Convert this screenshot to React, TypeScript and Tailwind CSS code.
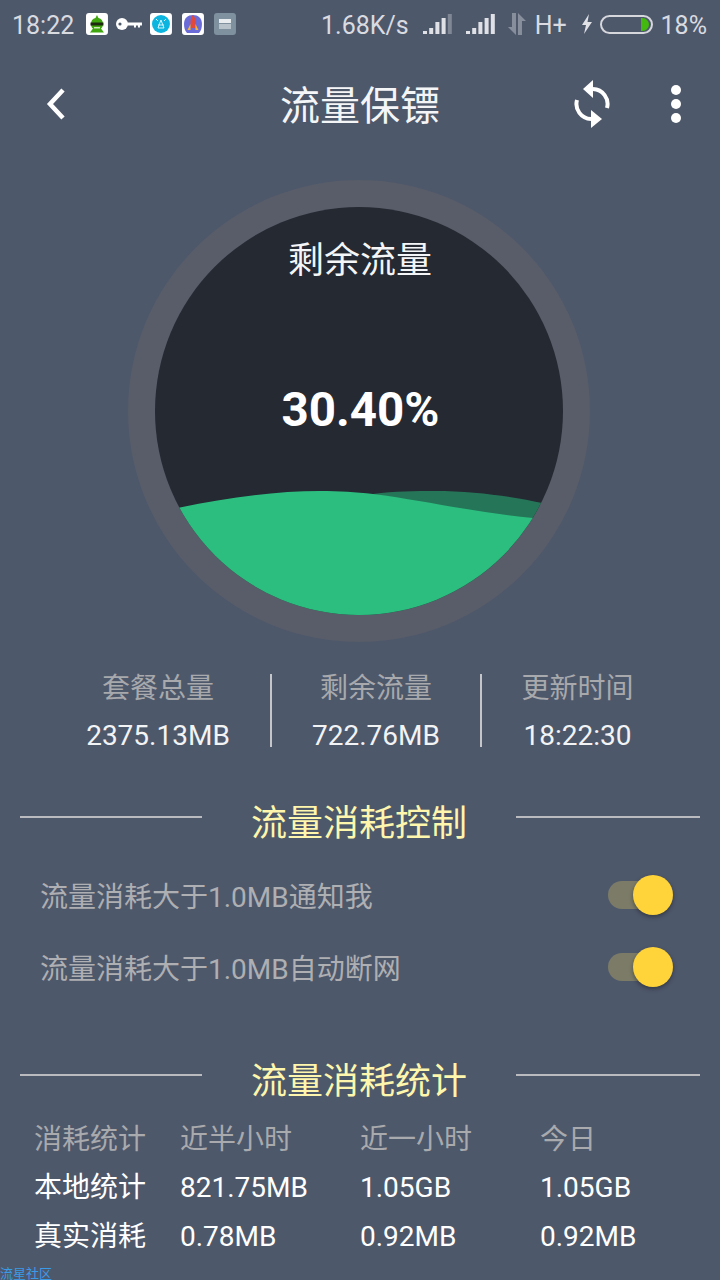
import React from "react";

const font = { fontFamily: 'Roboto, "Noto Sans CJK SC", sans-serif' };

function Signal({ faint }: { faint?: boolean }) {
  const hs = [3, 6, 12, 16, 20];
  return (
    <svg width="30" height="20" viewBox="0 0 30 20">
      {hs.map((h, i) => (
        <rect key={i} x={i * 6.2} y={20 - h} width="4" height={h} fill="#dfe1e6" opacity={faint && i === 4 ? 0.35 : 1} />
      ))}
    </svg>
  );
}

function Sync() {
  return (
    <svg width="36" height="48" viewBox="0 0 36 48" fill="none">
      <path d="M19 9A15 15 0 0 1 33 28" stroke="#fff" strokeWidth="4" />
      <path d="M17 39A15 15 0 0 1 3 20" stroke="#fff" strokeWidth="4" />
      <polygon points="19,0 19,18 9,9" fill="#fff" />
      <polygon points="17,30 17,48 28,39" fill="#fff" />
    </svg>
  );
}

function Heading({ children }: { children: React.ReactNode }) {
  return (
    <div className="flex items-center h-[50px] px-[20px]">
      <div className="h-[2px] w-[182px] bg-[#b9bbbf] mb-[10px]" />
      <div className="flex-1 text-center text-[36px] leading-[50px] pt-[4px] text-[#fdf6ac]">{children}</div>
      <div className="h-[2px] w-[184px] bg-[#b9bbbf] mb-[10px]" />
    </div>
  );
}

function SwitchRow({ label }: { label: string }) {
  return (
    <div className="flex items-center justify-between h-[72px] pl-[40px] pr-[47px]">
      <span className="text-[28px] pt-[6px] text-[#aeafb2]">{label}</span>
      <div className="relative w-[65px] h-[28px]">
        <div className="w-[60px] h-[28px] rounded-full bg-[#7b7b68]" />
        <div className="absolute right-0 top-[-6px] w-[40px] h-[40px] rounded-full bg-[#ffd33a] shadow-[0_2px_4px_rgba(0,0,0,0.35)]" />
      </div>
    </div>
  );
}

const rows = [
  { c: "text-[#a9aaad] pt-[2px]", v: ["消耗统计", "近半小时", "近一小时", "今日"] },
  { c: "text-white", v: ["本地统计", "821.75MB", "1.05GB", "1.05GB"] },
  { c: "text-white", v: ["真实消耗", "0.78MB", "0.92MB", "0.92MB"] },
];

export default function App() {
  return (
    <div style={font} className="w-[720px] h-[1280px] overflow-hidden bg-[#4e586b] text-white">
      {/* status bar */}
      <div className="h-[48px] mb-[2px] flex items-center pl-[12px] pr-[13px] text-[25px] text-[#d9dbe0]">
        <span className="pt-[4px]">18:22</span>
        <svg className="ml-[12px]" width="22" height="22" viewBox="0 0 22 22">
          <rect width="22" height="22" rx="3" fill="#fff" />
          <path d="M11 2l1.500 3c3 .5 4.500 3 4.500 6 0 2-.5 3.500-2 4.500l3 4H4l3-4c-1.500-1-2-2.500-2-4.500 0-3 1.500-5.500 4.500-6z" fill="#3fa60f" />
          <rect x="4.500" y="9.500" width="13" height="3" fill="#1d2a10" />
          <rect x="8" y="14" width="6" height="1.500" fill="#cfe9bb" />
        </svg>
        <svg className="ml-[8px]" width="26" height="14" viewBox="0 0 26 14">
          <circle cx="6" cy="7" r="6" fill="#fff" />
          <circle cx="4" cy="7" r="1.6" fill="#4e586b" />
          <path d="M11 5.500h15v3h-2v2h-2v-2h-2v2h-2v-2h-7z" fill="#fff" />
        </svg>
        <svg className="ml-[8px]" width="22" height="22" viewBox="0 0 22 22">
          <rect width="22" height="22" rx="3" fill="#fff" />
          <circle cx="11" cy="11" r="9" fill="#0cb5e0" />
          <path d="M11 7l-3 8h6zM6 6l2 2M16 6l-2 2M8 12h6" stroke="#d9f5fb" strokeWidth="1" fill="none" />
        </svg>
        <svg className="ml-[10px]" width="22" height="22" viewBox="0 0 22 22">
          <rect width="22" height="22" rx="3" fill="#fff" />
          <path d="M11 2c5 0 9 3 9 9 0 4-1 7-3 9H5c-2-2-3-5-3-9 0-6 4-9 9-9z" fill="#6a6bd8" />
          <path d="M11 2c2 2 2.500 5 2.500 8v5h-5v-5c0-3 .5-6 2.500-8z" fill="#e2483c" />
          <path d="M8.500 11l-3 6h3zM13.500 11l3 6h-3z" fill="#f3b43a" />
        </svg>
        <svg className="ml-[10px]" width="22" height="22" viewBox="0 0 22 22">
          <rect width="22" height="22" rx="3" fill="#7f919f" />
          <rect x="5" y="6" width="12" height="4" fill="#e8ecef" />
          <rect x="5" y="11" width="12" height="5" fill="#b8c2ca" />
        </svg>
        <span className="ml-[85px] pt-[4px]">1.68K/s</span>
        <div className="ml-[14px]"><Signal faint /></div>
        <div className="ml-[13px]"><Signal /></div>
        <svg className="ml-[11px] opacity-40" width="20" height="22" viewBox="0 0 20 22">
          <path d="M5 0h4v22L1 14h4zM11 0l8 8h-4v14h-4z" fill="#dfe1e6" />
        </svg>
        <span className="ml-[8px] pt-[4px]">H+</span>
        <svg className="ml-[15px]" width="10" height="20" viewBox="0 0 10 20">
          <path d="M7 0L0 11h4l-2 9 8-12H5.500z" fill="#dfe1e6" />
        </svg>
        <div className="ml-[8px] w-[53px] h-[19px] rounded-full border-2 border-[#d5d7dc] flex justify-end items-center pr-[2px]">
          <div className="w-[8px] h-[13px] bg-[#43b80e] rounded-r-full" />
        </div>
        <span className="ml-[8px] pt-[4px]">18%</span>
      </div>

      {/* header */}
      <div className="h-[108px] grid grid-cols-[1fr_auto_1fr] items-center">
        <div className="pl-[46px]">
          <svg width="20" height="32" viewBox="0 0 20 32" fill="none">
            <path d="M17 2L4 16l13 14" stroke="#fff" strokeWidth="4.500" />
          </svg>
        </div>
        <div className="text-[40px] leading-[48px] pt-[6px] text-[#f4f5f7]">流量保镖</div>
        <div className="flex items-center justify-end pr-[39px] gap-[61px]">
          <Sync />
          <div className="flex flex-col gap-[4px]">
            <div className="w-[10px] h-[10px] rounded-full bg-white" />
            <div className="w-[10px] h-[10px] rounded-full bg-white" />
            <div className="w-[10px] h-[10px] rounded-full bg-white" />
          </div>
        </div>
      </div>

      {/* gauge */}
      <div className="mt-[22px] ml-[128px] w-[462px] h-[462px] rounded-full bg-[#585d69] flex items-center justify-center">
        <div className="relative w-[408px] h-[408px] rounded-full bg-[#252932] overflow-hidden flex flex-col items-center">
          <svg className="absolute inset-0" width="408" height="408" viewBox="0 0 408 408">
            <path d="M218 287C240 284 260 284 280 284C320 284 360 290 387 296L408 301V408H200Z" fill="#257658" />
            <path d="M0 306L25 300.500C70 291 120 284 165 284C185 284 200 285 218 287C250 291 280 297 305 301C330 305 355 309 378 311L408 316V408H0Z" fill="#2cbe7f" />
          </svg>
          <div className="relative mt-[29px] ml-[2px] text-[36px] leading-[50px] text-[#f4f5f7]">剩余流量</div>
          <div className="relative mt-[94px] ml-[3px] text-[47.5px] leading-[60px] font-bold text-white">30.40%</div>
        </div>
      </div>

      {/* stats */}
      <div className="mt-[32px] ml-[46px] grid grid-cols-[226px_210px_190px] grid-rows-[73px] text-center text-[28px] leading-[36px]">
        <div className="border-r-2 border-[#c4c6ca]">
          <div className="text-[#a8a9ac] -mt-[3px]">套餐总量</div>
          <div className="text-[#f2f3f5] mt-[11px]">2375.13MB</div>
        </div>
        <div className="border-r-2 border-[#c4c6ca]">
          <div className="text-[#a8a9ac] -mt-[3px]">剩余流量</div>
          <div className="text-[#f2f3f5] mt-[11px]">722.76MB</div>
        </div>
        <div className="pl-[1px]">
          <div className="text-[#a8a9ac] -mt-[3px]">更新时间</div>
          <div className="text-[#f2f3f5] mt-[11px]">18:22:30</div>
        </div>
      </div>

      <div className="mt-[50px]"><Heading>流量消耗控制</Heading></div>
      <div className="mt-[12px]">
        <SwitchRow label="流量消耗大于1.0MB通知我" />
        <SwitchRow label="流量消耗大于1.0MB自动断网" />
      </div>

      <div className="mt-[52px]"><Heading>流量消耗统计</Heading></div>
      <div className="mt-[9px] pl-[34px] text-[28px]">
        {rows.map((r) => (
          <div key={r.v[0]} className={`grid grid-cols-[146px_180px_180px_1fr] h-[49px] items-center ${r.c}`}>
            {r.v.map((t) => (
              <span key={t}>{t}</span>
            ))}
          </div>
        ))}
      </div>
      <div className="mt-[6px] text-[13px] leading-[13px] text-[#3a9be8]">流星社区</div>
    </div>
  );
}
